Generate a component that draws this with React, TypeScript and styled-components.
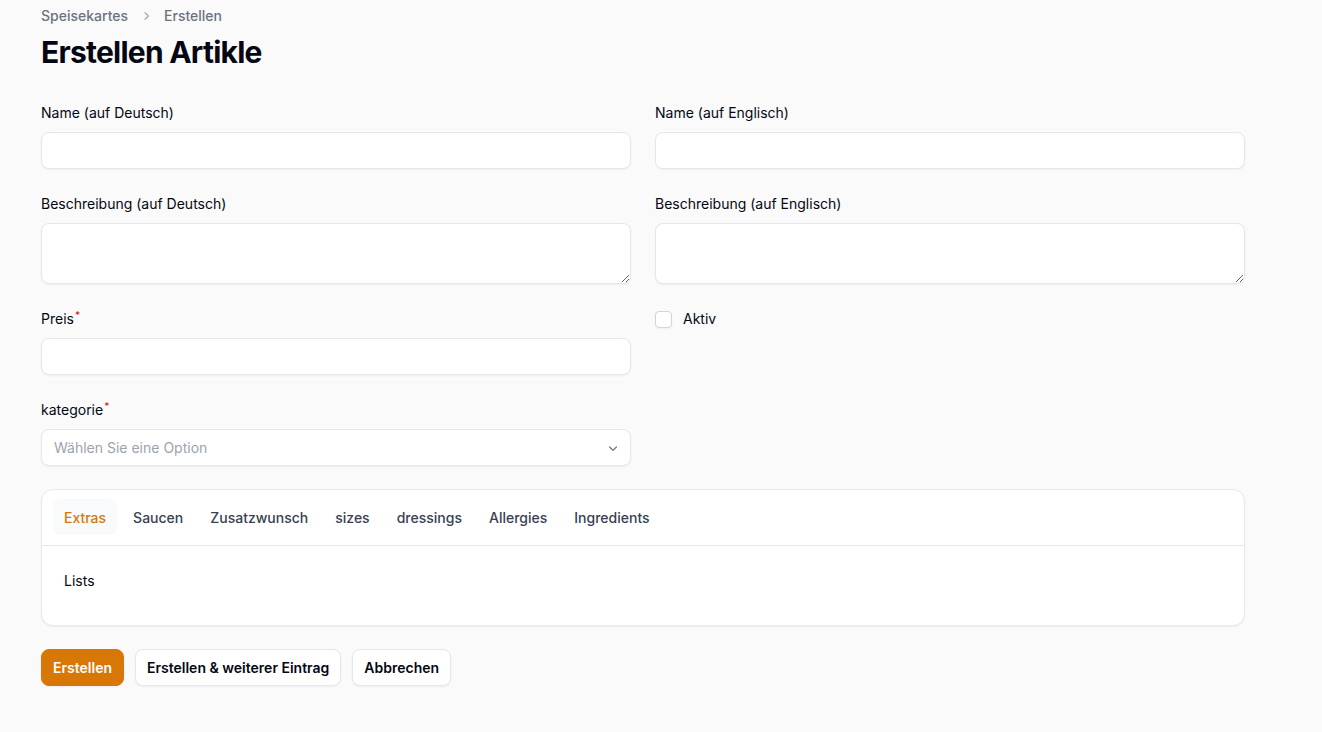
import React from "react";
import styled, { createGlobalStyle } from "styled-components";

const Global = createGlobalStyle`
  html, body { margin: 0; padding: 0; background: #fafafa; }
  body { font-family: Inter, "Noto Sans", sans-serif; color: #030712; -webkit-font-smoothing: antialiased; }
  * { box-sizing: border-box; }
`;

const Page = styled.div`
  width: 1322px;
  min-height: 732px;
  background: #fafafa;
  padding: 6px 77px 40px 41px;
`;

const Breadcrumbs = styled.nav`
  display: flex;
  align-items: center;
  gap: 10px;
  font-size: 14px;
  line-height: 20px;
  color: #6b7280;
  font-weight: 500;
`;

const Heading = styled.h1`
  margin: 8px 0 0;
  font-size: 30px;
  line-height: 36px;
  font-weight: 700;
  letter-spacing: -0.025em;
  color: #030712;
`;

const Form = styled.form`
  margin-top: 33px;
  display: flex;
  flex-direction: column;
  gap: 23px;
`;

const Grid = styled.div`
  display: grid;
  grid-template-columns: 1fr 1fr;
  column-gap: 24px;
  row-gap: 25px;
  align-items: start;
`;

const Field = styled.div`
  display: flex;
  flex-direction: column;
  gap: 9px;
`;

const Label = styled.label`
  font-size: 14px;
  line-height: 20px;
  font-weight: 400;
  color: #030712;
`;

const Req = styled.span`
  position: relative;
  top: -5px;
  color: #dc2626;
  font-weight: 500;
  font-size: 10px;
  line-height: 0;
  margin-left: 1px;
`;

const Input = styled.input`
  height: 37px;
  width: 100%;
  border: 1px solid #e5e7eb;
  border-radius: 8px;
  background: #fff;
  box-shadow: 0 1px 2px rgba(0, 0, 0, 0.05);
  font: inherit;
  font-size: 14px;
  padding: 0 12px;
  outline: none;
`;

const TextArea = styled.textarea`
  height: 61px;
  width: 100%;
  border: 1px solid #e5e7eb;
  border-radius: 8px;
  background: #fff;
  box-shadow: 0 1px 2px rgba(0, 0, 0, 0.05);
  font: inherit;
  padding: 8px 12px;
  outline: none;
  display: block;
`;

const SelectBox = styled.div`
  height: 37px;
  border: 1px solid #e5e7eb;
  border-radius: 8px;
  background: #fff;
  box-shadow: 0 1px 2px rgba(0, 0, 0, 0.05);
  display: flex;
  align-items: center;
  justify-content: space-between;
  padding: 0 9px 0 12px;
  font-size: 14px;
  color: #9ca3af;
`;

const CheckRow = styled.div`
  display: flex;
  align-items: center;
  gap: 11px;
  height: 20px;
`;

const CheckBox = styled.span`
  width: 17px;
  height: 17px;
  border: 1px solid #d1d5db;
  border-radius: 4px;
  background: #fff;
  box-shadow: 0 1px 2px rgba(0, 0, 0, 0.05);
`;

const Card = styled.div`
  width: 100%;
  background: #fff;
  border: 1px solid #e9e9eb;
  border-radius: 12px;
  box-shadow: 0 1px 2px rgba(0, 0, 0, 0.05);
`;

const TabBar = styled.div`
  display: flex;
  gap: 5px;
  padding: 9px 11px 10px;
  border-bottom: 1px solid #e5e7eb;
`;

const Tab = styled.button<{ $active?: boolean }>`
  border: 0;
  height: 36px;
  padding: 0 11px;
  border-radius: 8px;
  background: ${(p) => (p.$active ? "#f9fafb" : "transparent")};
  color: ${(p) => (p.$active ? "#d97706" : "#374151")};
  font: inherit;
  font-size: 14px;
  font-weight: 500;
  cursor: pointer;
`;

const TabContent = styled.div`
  padding: 25px 22px 34px;
  font-size: 14px;
  line-height: 20px;
  font-weight: 400;
  color: #030712;
`;

const Actions = styled.div`
  display: flex;
  gap: 11px;
`;

const Button = styled.button<{ $primary?: boolean }>`
  height: 37px;
  padding: 0 11px;
  border-radius: 8px;
  font: inherit;
  font-size: 14px;
  font-weight: 600;
  cursor: pointer;
  background: ${(p) => (p.$primary ? "#d97706" : "#fff")};
  color: ${(p) => (p.$primary ? "#fff" : "#030712")};
  border: 1px solid ${(p) => (p.$primary ? "#d97706" : "#e5e7eb")};
  box-shadow: 0 1px 2px rgba(0, 0, 0, 0.05);
`;

const Chevron = () => (
  <svg width="16" height="16" viewBox="0 0 20 20" fill="#6b7280">
    <path fillRule="evenodd" d="M5.22 8.22a.75.75 0 0 1 1.06 0L10 11.94l3.72-3.72a.75.75 0 1 1 1.06 1.06l-4.25 4.25a.75.75 0 0 1-1.06 0L5.22 9.28a.75.75 0 0 1 0-1.06Z" clipRule="evenodd" />
  </svg>
);

const Sep = () => (
  <svg width="16" height="16" viewBox="0 0 20 20" fill="#9ca3af">
    <path fillRule="evenodd" d="M8.22 5.22a.75.75 0 0 1 1.06 0l4.25 4.25a.75.75 0 0 1 0 1.060l-4.25 4.25a.75.75 0 0 1-1.06-1.06L11.94 10 8.220 6.28a.75.75 0 0 1 0-1.06Z" clipRule="evenodd" />
  </svg>
);

const tabs = ["Extras", "Saucen", "Zusatzwunsch", "sizes", "dressings", "Allergies", "Ingredients"];

export default function App() {
  return (
    <Page>
      <Global />
      <Breadcrumbs>
        <span>Speisekartes</span>
        <Sep />
        <span>Erstellen</span>
      </Breadcrumbs>
      <Heading>Erstellen Artikle</Heading>
      <Form onSubmit={(e) => e.preventDefault()}>
        <Grid>
          <Field>
            <Label>Name (auf Deutsch)</Label>
            <Input />
          </Field>
          <Field>
            <Label>Name (auf Englisch)</Label>
            <Input />
          </Field>
          <Field>
            <Label>Beschreibung (auf Deutsch)</Label>
            <TextArea />
          </Field>
          <Field>
            <Label>Beschreibung (auf Englisch)</Label>
            <TextArea />
          </Field>
          <Field>
            <Label>
              Preis<Req>*</Req>
            </Label>
            <Input />
          </Field>
          <CheckRow>
            <CheckBox />
            <Label>Aktiv</Label>
          </CheckRow>
          <Field>
            <Label>
              kategorie<Req>*</Req>
            </Label>
            <SelectBox>
              <span>Wählen Sie eine Option</span>
              <Chevron />
            </SelectBox>
          </Field>
        </Grid>
        <Card>
          <TabBar>
            {tabs.map((t, i) => (
              <Tab key={t} type="button" $active={i === 0}>
                {t}
              </Tab>
            ))}
          </TabBar>
          <TabContent>Lists</TabContent>
        </Card>
        <Actions>
          <Button $primary type="button">Erstellen</Button>
          <Button type="button">Erstellen &amp; weiterer Eintrag</Button>
          <Button type="button">Abbrechen</Button>
        </Actions>
      </Form>
    </Page>
  );
}
